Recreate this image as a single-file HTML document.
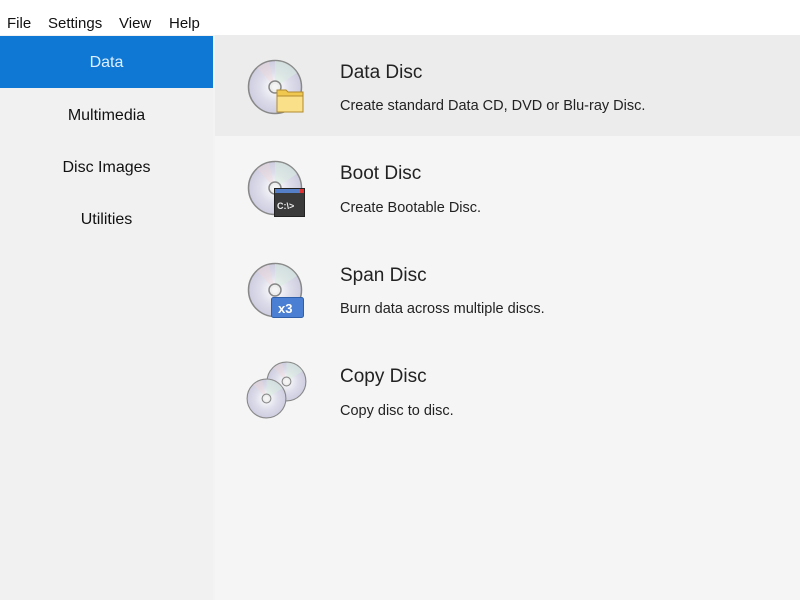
<!DOCTYPE html>
<html><head><style>
body{margin:0;width:800px;height:600px;overflow:hidden;background:#f3f3f3;font-family:"Liberation Sans",sans-serif;position:relative}
.menu{position:absolute;left:0;top:0;width:800px;height:35px;background:#fff;font-size:15px;color:#111}
.menu span{position:absolute;top:15px}
.side{position:absolute;left:0;top:35px;width:213px;height:565px;background:#f1f1f1}
.side div{position:absolute;left:0;width:213px;text-align:center;font-size:16px;color:#111}
.sel{background:#0e78d4;color:#dfefff!important;height:52px;line-height:54px;top:1px}
.main{position:absolute;left:215px;top:35px;width:585px;height:565px;background:#f5f5f5}
.hl{position:absolute;left:215px;top:35px;width:585px;height:101px;background:#ececec}
.t{position:absolute;left:340px;font-size:19px;color:#222}
.d{position:absolute;left:340px;font-size:14.5px;color:#222}
svg{position:absolute}
</style></head><body>
<div class="menu"><span style="left:7px">File</span><span style="left:48px">Settings</span><span style="left:119px">View</span><span style="left:169px">Help</span></div>
<div class="side">
<div class="sel">Data</div>
<div style="top:72px">Multimedia</div>
<div style="top:124px">Disc Images</div>
<div style="top:176px">Utilities</div>
</div>
<div class="main"></div><div class="hl"></div>
<svg width="0" height="0"><defs>
<radialGradient id="g" cx="0.5" cy="0.5" r="0.5"><stop offset="0.2" stop-color="#f4f4f8"/><stop offset="0.6" stop-color="#dcdcea"/><stop offset="1" stop-color="#cdcde0"/></radialGradient>
<symbol id="disc" viewBox="0 0 56 56"><circle cx="28" cy="28" r="26.5" fill="url(#g)" stroke="#888" stroke-width="1.5"/><path d="M28 2 A26 26 0 0 1 50 14 L28 28Z" fill="#d8eedd" opacity=".5"/><path d="M10 9 A26 26 0 0 1 22 3 L28 28Z" fill="#f0d6d6" opacity=".4"/><circle cx="28" cy="28" r="6" fill="#eee" stroke="#888" stroke-width="1.5"/><circle cx="28" cy="28" r="3" fill="#f5f5f5"/></symbol>
</defs></svg>
<svg style="left:247px;top:59px" width="56" height="56"><use href="#disc"/></svg>
<svg style="left:275px;top:86px" width="30" height="30"><path d="M2 4h9l2 2h15v20H2z" fill="#f0c850" stroke="#b08a30"/><rect x="2" y="10" width="26" height="16" fill="#fbe08a" stroke="#b08a30"/></svg>
<div class="t" style="top:62px">Data Disc</div><div class="d" style="top:98px">Create standard Data CD, DVD or Blu-ray Disc.</div>
<svg style="left:247px;top:160px" width="56" height="56"><use href="#disc"/></svg>
<svg style="left:274px;top:188px" width="31" height="29"><rect x="0.5" y="0.5" width="30" height="28" fill="#3a3a3a" stroke="#222"/><rect x="1" y="1" width="29" height="4" fill="#5580c8"/><rect x="26" y="1" width="4" height="4" fill="#d33"/><text x="3" y="21" font-size="9" fill="#eee" font-family="Liberation Sans" font-weight="bold">C:\&gt;</text></svg>
<div class="t" style="top:163px">Boot Disc</div><div class="d" style="top:200px">Create Bootable Disc.</div>
<svg style="left:247px;top:262px" width="56" height="56"><use href="#disc"/></svg>
<svg style="left:271px;top:297px" width="33" height="21"><rect x="0.5" y="0.5" width="32" height="20" rx="2" fill="#4a7fd4" stroke="#2f5fa8"/><text x="7" y="16" font-size="13" fill="#fff" font-family="Liberation Sans" font-weight="bold">x3</text></svg>
<div class="t" style="top:265px">Span Disc</div><div class="d" style="top:301px">Burn data across multiple discs.</div>
<svg style="left:266px;top:361px" width="41" height="41" viewBox="0 0 56 56"><use href="#disc"/></svg>
<svg style="left:246px;top:378px" width="41" height="41" viewBox="0 0 56 56"><use href="#disc"/></svg>
<div class="t" style="top:366px">Copy Disc</div><div class="d" style="top:403px">Copy disc to disc.</div>
</body></html>
